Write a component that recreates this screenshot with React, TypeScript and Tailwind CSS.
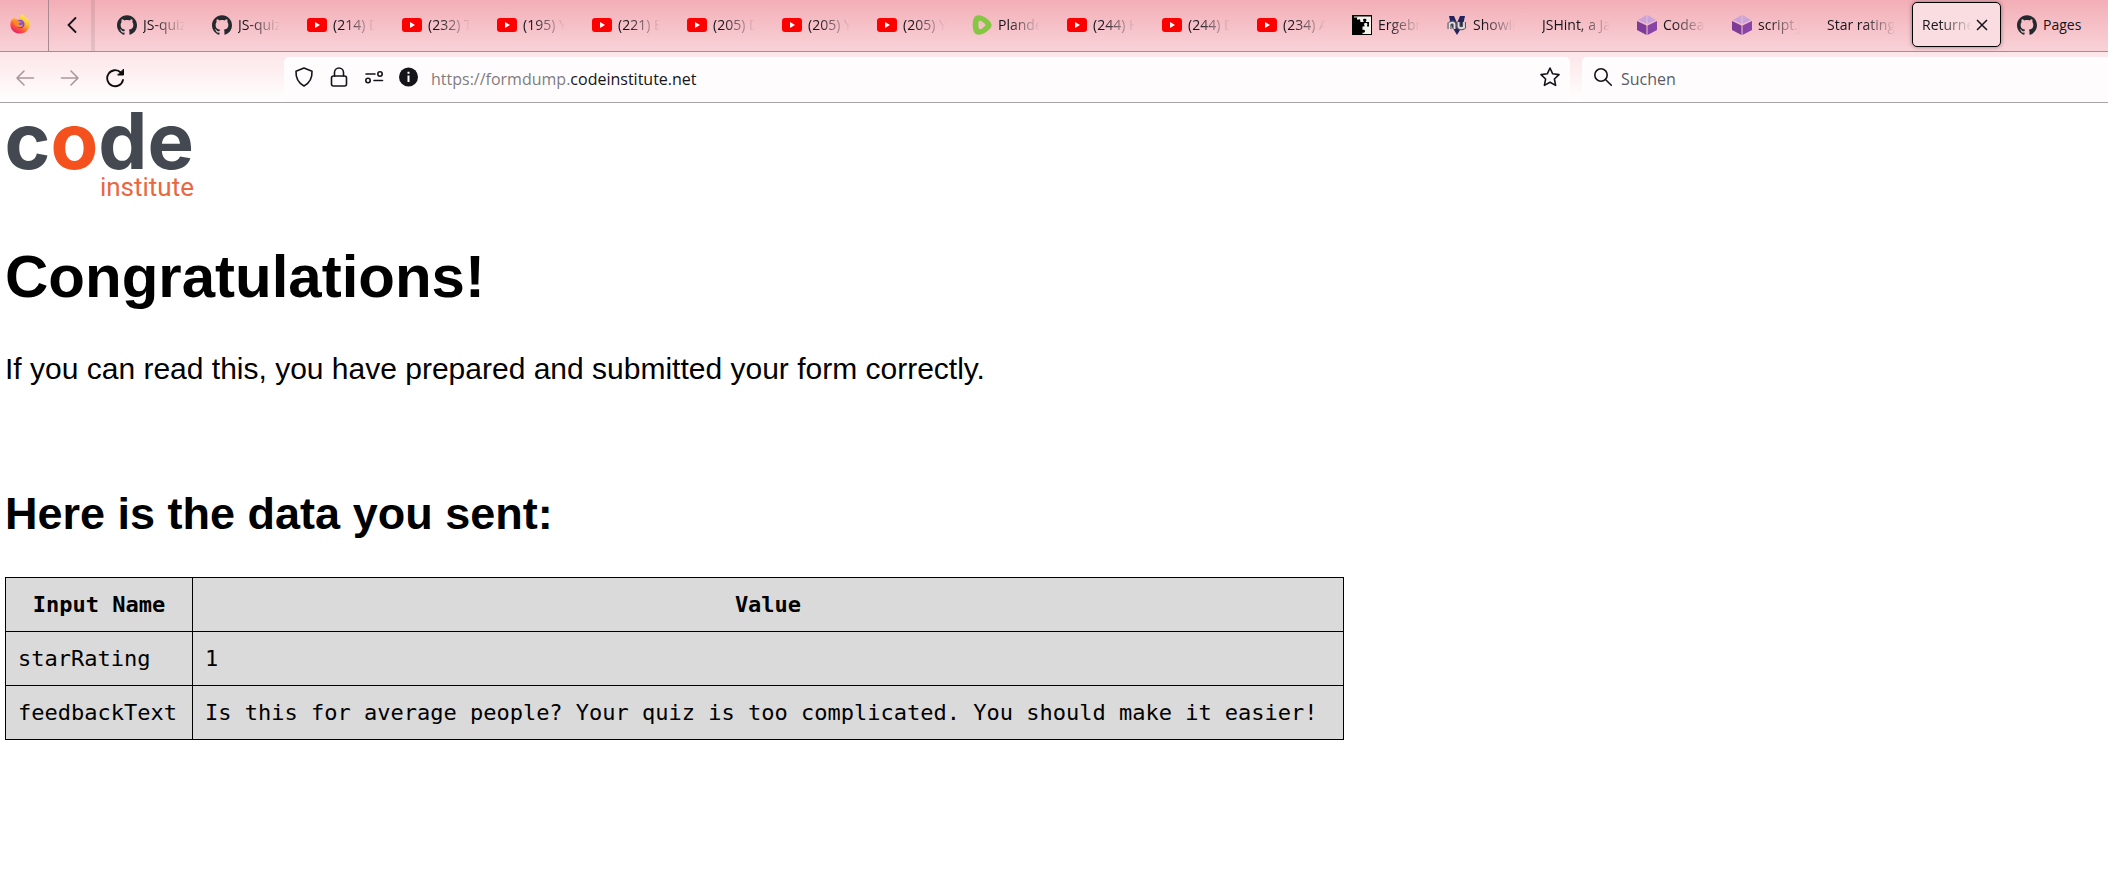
import React from "react";
import { SiGithub } from "react-icons/si";

type IconKind = "github" | "youtube" | "rumble" | "puzzle" | "nu" | "cube" | "none";

interface Tab {
  icon: IconKind;
  title: string;
  active?: boolean;
}

const tabs: Tab[] = [
  { icon: "github", title: "JS-quiz" },
  { icon: "github", title: "JS-quiz" },
  { icon: "youtube", title: "(214) D" },
  { icon: "youtube", title: "(232) T" },
  { icon: "youtube", title: "(195) Y" },
  { icon: "youtube", title: "(221) E" },
  { icon: "youtube", title: "(205) D" },
  { icon: "youtube", title: "(205) Y" },
  { icon: "youtube", title: "(205) Y" },
  { icon: "rumble", title: "Plande" },
  { icon: "youtube", title: "(244) H" },
  { icon: "youtube", title: "(244) D" },
  { icon: "youtube", title: "(234) A" },
  { icon: "puzzle", title: "Ergebn" },
  { icon: "nu", title: "Showin" },
  { icon: "none", title: "JSHint, a Ja" },
  { icon: "cube", title: "Codea" },
  { icon: "cube", title: "script.js" },
  { icon: "none", title: "Star rating" },
  { icon: "none", title: "Returned", active: true },
  { icon: "github", title: "Pages" },
];

const rows = [
  { name: "starRating", value: "1" },
  {
    name: "feedbackText",
    value: "Is this for average people? Your quiz is too complicated. You should make it easier!",
  },
];

function FirefoxIcon() {
  return (
    <svg viewBox="0 0 20 20" className="size-5" aria-hidden="true">
      <defs>
        <linearGradient id="ff-body" x1="0.85" y1="0" x2="0.25" y2="1">
          <stop offset="0.1" stopColor="#fff04a" />
          <stop offset="0.45" stopColor="#ffb02a" />
          <stop offset="0.7" stopColor="#ff5a36" />
          <stop offset="1" stopColor="#e6157a" />
        </linearGradient>
        <radialGradient id="ff-core" cx="0.6" cy="0.3" r="0.8">
          <stop offset="0" stopColor="#9059ff" />
          <stop offset="1" stopColor="#4a3fb5" />
        </radialGradient>
      </defs>
      <path
        d="M12.600 0c.3 2 2.400 2.700 4 4.800.3-.3.2-.8.1-1.200 2.600 2.600 3.600 6.500 2.300 9.900-1.500 3.900-5.100 6-9 6C4.900 19.500.5 16 .4 10.900c0-2.500.8-4.700 2.100-6.300 0 .5 0 .9.2 1.300C3.400 4.500 4.300 3.600 5 3c0 .8.200 1.500.8 2 1.200-.2 2.500-.1 3.400.4C9.500 3.200 10.800 1.300 12.600 0Z"
        fill="url(#ff-body)"
      />
      <circle cx="10.200" cy="10" r="4.300" fill="url(#ff-core)" />
      <path
        d="M3.600 7c1.800-1.700 4.500-1.200 5.700.2 1 .2 1.700.3 1.900.6-.3 1-1.700 1.200-2.200 1.700-.5.6 0 1.600 1.300 1.500 1.400-.1 2-.9 2.900-.5-.3 2.200-2.700 3.300-4.800 2.700C5.500 12.500 4 10.100 3.600 7Z"
        fill="#ff8a2a"
      />
    </svg>
  );
}

function TabIcon({ kind }: { kind: IconKind }) {
  switch (kind) {
    case "github":
      return <SiGithub className="size-5 shrink-0 text-[#24292e]" aria-hidden="true" />;
    case "youtube":
      return (
        <svg viewBox="0 0 20 20" className="size-5 shrink-0" aria-hidden="true">
          <rect x="0" y="3" width="20" height="14" rx="3" fill="#ff0000" />
          <path d="M8 7v6l5-3z" fill="#fff" />
        </svg>
      );
    case "rumble":
      return (
        <svg viewBox="0 0 20 20" className="size-5 shrink-0" aria-hidden="true">
          <path
            fillRule="evenodd"
            d="M2 3C3.500-.4 7.500-.4 11.500 1.500c3 1.500 5 3.300 7 5.700 1.500 1.900 1.500 3.900 0 5.700-2 2.400-4.500 4.400-7.500 5.800-3.800 1.800-7.500 1.700-9-1.600-1.800-4-1.800-10 0-14.100Zm4.800 3.300c-.6 2-.6 5.200 0 7.200.4 1 1.300 1 2.300.4 1.600-.9 2.900-1.800 3.900-2.900.6-.6.600-1.300 0-1.900C12 8 10.700 7 9.100 6.100c-1-.600-1.900-.7-2.300.2Z"
            fill="#85c742"
          />
        </svg>
      );
    case "puzzle":
      return (
        <svg viewBox="0 0 20 20" className="size-5 shrink-0" aria-hidden="true">
          <rect width="20" height="20" fill="#000" />
          <path
            d="M2 1.500h17V19h-8.500v-1.500c1 .5 2.500 0 2.500-1.300 0-1.200-1.500-1.700-2.500-1.200v-3.500c1.200.3 2 0 2-.8 0-.7-.5-1-.5-1.700 0-1.500 3.500-1.500 3.500 0 0 .7-.5 1-.5 1.700 0 .8.800 1 2 .8V7h-3c-.5-.5.5-1.200.5-2 0-1.700-3.500-1.700-3.500 0 0 .8 1 1.500.5 2H8.500c-.5-1 0-2-.5-2.500-.7-.7-1.300.5-2.200.3-1-.3-1-1.800-.3-2.300H2z"
            fill="#f4f4ea"
          />
        </svg>
      );
    case "nu":
      return (
        <svg viewBox="0 0 20 20" className="size-5 shrink-0" aria-hidden="true">
          <path d="M2 1h5l3 7 3-7h5l-2 9-6 10L4 10z" fill="#23235f" />
          <path
            d="M2.500 14V7.500M2.500 9c1-2 5-2 5 .5V14M11.500 7v4c0 3 5.500 3 5.500 0V7v6.500"
            fill="none"
            stroke="#55555c"
            strokeWidth="4"
          />
          <path
            d="M2.500 14V7.500M2.500 9c1-2 5-2 5 .5V14M11.500 7v4c0 3 5.500 3 5.500 0V7v6.500"
            fill="none"
            stroke="#e4dce0"
            strokeWidth="1.800"
          />
        </svg>
      );
    case "cube":
      return (
        <svg viewBox="0 0 20 20" className="size-5 shrink-0" aria-hidden="true">
          <path d="M9.500 0v9L1 5zM10.500 0v9L19 5z" fill="#c9a3dc" />
          <path d="M0 6l9.500 4.500V20L0 15z" fill="#7d3c98" />
          <path d="M20 6l-9.500 4.500V20L20 15z" fill="#8a44a8" />
        </svg>
      );
    default:
      return null;
  }
}

function TabItem({ tab }: { tab: Tab }) {
  const fade =
    "min-w-0 flex-1 overflow-hidden text-left whitespace-nowrap [mask-image:linear-gradient(to_left,transparent,black_32px)]";
  const label = tab.title === "Pages" ? "min-w-0 flex-1 text-left whitespace-nowrap" : fade;
  if (tab.active) {
    return (
      <div className="flex h-[45px] w-[89px] shrink-0 items-center rounded-[5px] border border-black bg-[#f9dde1] pr-3 pl-[9px] shadow-[0_0_4px_rgba(0,0,0,0.4)]">
        <button className={fade}>{tab.title}</button>
        <button aria-label="Close tab" className="ml-1 shrink-0">
          <svg viewBox="0 0 12 12" className="size-3" fill="none" stroke="#15141a" strokeWidth="1.500" aria-hidden="true">
            <path d="M1 1l10 10M11 1L1 11" />
          </svg>
        </button>
      </div>
    );
  }
  return (
    <button className="flex h-[45px] w-[89px] shrink-0 items-center gap-[6px] pr-[11px] pl-[10px]">
      <TabIcon kind={tab.icon} />
      <span className={label}>{tab.title}</span>
    </button>
  );
}

function TabStrip() {
  return (
    <div className="flex h-[52px] border-b border-[#a98a90] bg-linear-to-b from-[#f3aeb7] to-[#f8d2d8] text-sm">
      <button aria-label="Firefox" className="flex w-[49px] shrink-0 items-center border-r border-[#a98a90] pb-1 pl-[10px]">
        <FirefoxIcon />
      </button>
      <button aria-label="Scroll tabs left" className="flex w-[42px] shrink-0 items-center justify-center pb-[2px] pl-1">
        <svg viewBox="0 0 10 16" className="h-4 w-[10px]" fill="none" stroke="#15141a" strokeWidth="1.800" strokeLinecap="round" aria-hidden="true">
          <path d="M8.500 1L1.500 8l7 7" />
        </svg>
      </button>
      <div className="w-1 shrink-0 bg-black/8" />
      <nav aria-label="Tabs" className="flex min-w-0 flex-1 gap-[6px] overflow-hidden pt-[2px] pl-3">
        {tabs.map((tab, i) => (
          <TabItem key={i} tab={tab} />
        ))}
      </nav>
    </div>
  );
}

const line = { fill: "none", strokeWidth: 1.6, strokeLinecap: "round", strokeLinejoin: "round" } as const;

function Toolbar() {
  return (
    <div className="flex h-[51px] border-b border-[#a9a5a7] bg-linear-to-b from-[#fce5e8] to-white pt-[5px]">
      <div className="flex w-[284px] shrink-0 items-start gap-[25px] pt-[11px] pl-[15px]">
        <button aria-label="Back">
          <svg viewBox="0 0 20 20" className="size-5" stroke="#a8999c" {...line}>
            <path d="M2 10h16.500M9 3l-7 7 7 7" />
          </svg>
        </button>
        <button aria-label="Forward">
          <svg viewBox="0 0 20 20" className="size-5" stroke="#a8999c" {...line}>
            <path d="M1.500 10H18M11 3l7 7-7 7" />
          </svg>
        </button>
        <button aria-label="Reload">
          <svg viewBox="0 0 20 20" className="size-5" stroke="#0c0c0d" {...line} strokeWidth={1.8}>
            <path d="M18 12A8 8 0 1 1 15.800 4.500" />
            <path d="M18.500 1.500v5.500H13z" fill="#0c0c0d" strokeWidth="1" />
          </svg>
        </button>
      </div>
      <div className="flex min-w-0 flex-1 items-start rounded-t-[5px] bg-[#fffcfd] px-[10px] pt-[10px]">
        <div className="flex shrink-0 gap-[15px]">
          <svg viewBox="0 0 20 20" className="size-5" stroke="#15141a" {...line}>
            <path d="M10 1l8 3.300c.3 6.200-2 11.500-8 14.700C4 15.800 1.700 10.500 2 4.300z" />
          </svg>
          <svg viewBox="0 0 20 20" className="size-5" stroke="#15141a" {...line}>
            <rect x="2.500" y="9" width="15" height="10" rx="2" />
            <path d="M5.500 9V5.500a4.500 4.500 0 0 1 9 0V9" />
          </svg>
          <svg viewBox="0 0 20 20" className="size-5" stroke="#15141a" {...line}>
            <circle cx="16" cy="7" r="2.200" />
            <path d="M2 7h9M10 13.500h8.500" />
            <circle cx="4" cy="13.500" r="2.200" />
          </svg>
          <svg viewBox="0 0 20 20" className="size-5">
            <circle cx="9.500" cy="10" r="9.500" fill="#15141a" />
            <path d="M9.500 4.800v2M9.500 8.500v6.500" stroke="#fff" strokeWidth="2" />
          </svg>
        </div>
        <a href="https://formdump.codeinstitute.net" className="ml-3 min-w-0 flex-1 text-base leading-6 text-[#7f7c80]">
          https://formdump.<span className="text-[#15141a]">codeinstitute.net</span>
        </a>
        <button aria-label="Bookmark this page">
          <svg viewBox="0 0 20 20" className="size-5" stroke="#15141a" {...line}>
            <path d="M10 1l2.700 5.800 6.300.8-4.600 4.400 1.200 6.400L10 15.300l-5.600 3.100L5.600 12 1 7.600l6.300-.8z" />
          </svg>
        </button>
      </div>
      <label className="ml-3 flex w-[526px] shrink-0 items-start rounded-tl-[5px] bg-[#fffcfd] pt-[10px] pl-[11px]">
        <svg viewBox="0 0 20 20" className="size-5 shrink-0" stroke="#15141a" {...line} aria-hidden="true">
          <circle cx="8" cy="8" r="6.200" />
          <path d="M12.500 12.500l5.800 5.800" />
        </svg>
        <input
          type="search"
          aria-label="Suchen"
          placeholder="Suchen"
          className="ml-2 min-w-0 flex-1 bg-transparent text-base leading-6 outline-none placeholder:text-[#5b5b66]"
        />
      </label>
    </div>
  );
}

function Logo() {
  return (
    <div aria-label="code institute" className="flex w-[189px] flex-col items-end pt-[3px]">
      <div className="font-[Inter,sans-serif] text-[78px] leading-[69px] font-bold text-[#444850]">
        c<span className="text-[#f4511e]">o</span>de
      </div>
      <div className="font-[Roboto,sans-serif] text-[26px] leading-6 text-[#e8683f]">institute</div>
    </div>
  );
}

export default function App() {
  return (
    <div className="min-h-screen bg-white font-['Open_Sans',sans-serif] text-[#15141a]">
      <header>
        <TabStrip />
        <Toolbar />
      </header>
      <main className="px-[5px] font-['Liberation_Sans',Arial,sans-serif] text-black">
        <Logo />
        <h1 className="mt-[44px] text-[60px] leading-[68px] font-bold">Congratulations!</h1>
        <p className="mt-[41px] text-[30px] leading-[34px]">
          If you can read this, you have prepared and submitted your form correctly.
        </p>
        <h2 className="mt-[102px] text-[45px] leading-[52px] font-bold">Here is the data you sent:</h2>
        <table className="mt-[37px] border-collapse bg-[#dadada] font-['DejaVu_Sans_Mono',monospace] text-[22px] leading-[29px]">
          <thead>
            <tr>
              <th className="w-[187px] border border-black px-3 py-3 text-center font-bold">Input Name</th>
              <th className="w-[1151px] border border-black px-3 py-3 text-center font-bold">Value</th>
            </tr>
          </thead>
          <tbody>
            {rows.map((row) => (
              <tr key={row.name}>
                <td className="border border-black px-3 py-3">{row.name}</td>
                <td className="border border-black px-3 py-3">{row.value}</td>
              </tr>
            ))}
          </tbody>
        </table>
      </main>
    </div>
  );
}
